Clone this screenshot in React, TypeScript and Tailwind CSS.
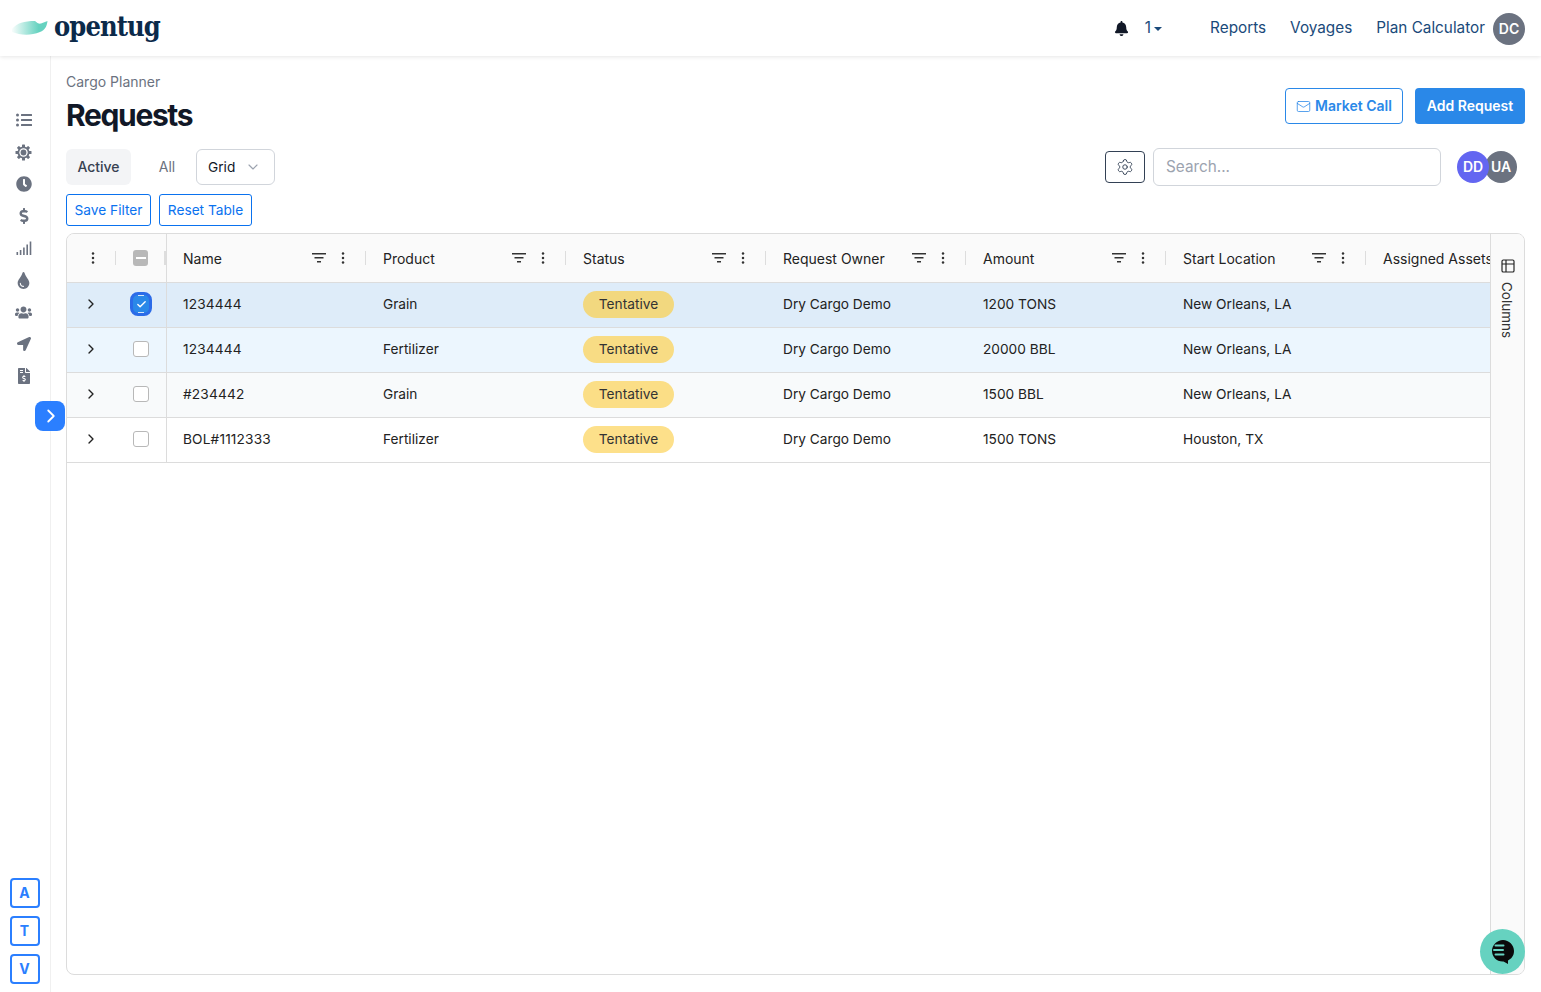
import { Mail, Settings, ChevronDown, ChevronRight, Check, Table2 } from 'lucide-react'
import {
  FaBell,
  FaClock,
  FaDollarSign,
  FaFileInvoiceDollar,
  FaListUl,
  FaLocationArrow,
  FaTint,
  FaUsers,
} from 'react-icons/fa'

const COLUMNS = ['Name', 'Product', 'Status', 'Request Owner', 'Amount', 'Start Location']

const ROWS = [
  { name: '1234444', product: 'Grain', amount: '1200 TONS', location: 'New Orleans, LA', bg: 'bg-[#deecf9]', pill: 'bg-[#f2d87f]', checked: true },
  { name: '1234444', product: 'Fertilizer', amount: '20000 BBL', location: 'New Orleans, LA', bg: 'bg-[#ecf6fe]', pill: 'bg-[#f8dc84]', checked: false },
  { name: '#234442', product: 'Grain', amount: '1500 BBL', location: 'New Orleans, LA', bg: 'bg-[#f8fafb]', pill: 'bg-[#fbde86]', checked: false },
  { name: 'BOL#1112333', product: 'Fertilizer', amount: '1500 TONS', location: 'Houston, TX', bg: 'bg-white', pill: 'bg-[#fde08a]', checked: false },
]

const CELL = 'w-[200px] shrink-0 pl-4 pb-0.5 flex items-center'

function Dots() {
  return (
    <svg width="16" height="16" viewBox="0 0 16 16" className="text-[#333] shrink-0">
      <circle cx="8" cy="3.5" r="1.25" fill="currentColor" />
      <circle cx="8" cy="8" r="1.25" fill="currentColor" />
      <circle cx="8" cy="12.5" r="1.25" fill="currentColor" />
    </svg>
  )
}

function FilterIcon() {
  return (
    <svg width="16" height="12" viewBox="0 0 16 12" className="text-[#333] shrink-0">
      <rect x="1" y="1" width="14" height="1.5" fill="currentColor" />
      <rect x="3.5" y="5" width="9" height="1.5" fill="currentColor" />
      <rect x="6" y="9" width="4" height="1.5" fill="currentColor" />
    </svg>
  )
}

function SignalIcon() {
  return (
    <svg width="16" height="14" viewBox="0 0 16 14" className="text-[#6b7280]">
      <rect x="0.5" y="11" width="1.6" height="3" fill="currentColor" />
      <rect x="3.8" y="9" width="1.6" height="5" fill="currentColor" />
      <rect x="7.1" y="6.5" width="1.6" height="7.5" fill="currentColor" />
      <rect x="10.4" y="3.5" width="1.6" height="10.5" fill="currentColor" />
      <rect x="13.7" y="0.5" width="1.6" height="13.5" fill="currentColor" />
    </svg>
  )
}

function GearIcon() {
  return (
    <svg width="17" height="17" viewBox="0 0 17 17" className="text-[#6b7280]">
      {[0, 45, 90, 135].map(a => (
        <rect key={a} x="7" y="0.5" width="3" height="16" rx="0.6" fill="currentColor" transform={`rotate(${a} 8.5 8.5)`} />
      ))}
      <circle cx="8.5" cy="8.5" r="6" fill="currentColor" />
      <circle cx="8.5" cy="8.5" r="4.2" fill="#fff" />
      <circle cx="8.5" cy="8.5" r="2.9" fill="currentColor" />
    </svg>
  )
}

function Logo() {
  return (
    <svg width="36" height="16" viewBox="0 0 36 16">
      <defs>
        <linearGradient id="swoosh" x1="0" y1="0" x2="1" y2="0">
          <stop offset="0" stopColor="#66d2c0" stopOpacity="0.05" />
          <stop offset="0.75" stopColor="#66d2c0" />
        </linearGradient>
      </defs>
      <path d="M0 9 C5 3 12 1 23 1 C25 3 27 4 29 3.5 L35.5 1 C35 6 33 10 28 12 C18 16 8 15 0 12 Z" fill="url(#swoosh)" />
    </svg>
  )
}

function Header() {
  return (
    <header className="h-14 shrink-0 bg-white flex items-center justify-between pl-3 pr-4 shadow-[0_1px_4px_rgba(0,0,0,0.1)] relative z-10">
      <div className="flex items-center gap-[6px]">
        <Logo />
        <span className="font-['DejaVu_Serif',serif] [font-stretch:condensed] font-bold text-[27px] leading-none tracking-[-0.9px] text-[#0b2a4a] -mt-[3px]">
          opentug
        </span>
      </div>
      <div className="flex items-center text-[#1a4a7a] text-[15.3px] pt-px">
        <FaBell className="text-[#111827] text-[15px] mr-4" />
        <span>1</span>
        <span className="ml-[3px] mr-[48px] border-x-[4px] border-t-[4px] border-x-transparent border-t-[#1a4a7a]" />
        <span className="mr-6">Reports</span>
        <span className="mr-6">Voyages</span>
        <span className="mr-2">Plan Calculator</span>
        <span className="w-8 h-8 rounded-full bg-[#6b7280] text-white text-sm font-semibold flex items-center justify-center">DC</span>
      </div>
    </header>
  )
}

function Sidebar() {
  const icons = [
    <FaListUl key="list" className="text-base" />,
    <GearIcon key="gear" />,
    <FaClock key="clock" className="text-base" />,
    <FaDollarSign key="dollar" className="text-base" />,
    <SignalIcon key="signal" />,
    <FaTint key="tint" className="text-[17px]" />,
    <FaUsers key="users" className="text-[17px]" />,
    <FaLocationArrow key="arrow" className="text-sm" />,
    <FaFileInvoiceDollar key="invoice" className="text-base" />,
  ]
  return (
    <aside className="w-[51px] shrink-0 border-r border-[#f0f0f0] flex flex-col items-center relative pt-12 pb-[8px] pr-[3px]">
      {icons.map((icon, i) => (
        <div key={i} className="h-8 w-8 flex items-center justify-center text-[#6b7280]">
          {icon}
        </div>
      ))}
      <button className="absolute left-[35px] top-[345px] w-[30px] h-[30px] rounded-lg bg-[#2b7fff] text-white flex items-center justify-center z-10">
        <ChevronRight size={22} strokeWidth={2} className="ml-px" />
      </button>
      <div className="mt-auto ml-[2px] flex flex-col gap-2">
        {['A', 'T', 'V'].map(l => (
          <div key={l} className="w-[30px] h-[30px] rounded-[4px] border-2 border-[#2b7fff] text-[#2b7fff] text-sm font-bold flex items-center justify-center">
            {l}
          </div>
        ))}
      </div>
    </aside>
  )
}

function Toolbar() {
  return (
    <>
      <div className="flex items-start justify-between">
        <div>
          <div className="text-sm leading-5 text-[#6b7280] pt-4">Cargo Planner</div>
          <h1 className="text-[30px] leading-9 font-bold tracking-[-1.35px] text-[#111827] mt-[5px]">Requests</h1>
        </div>
        <div className="flex gap-3 mt-8">
          <button className="h-9 w-[118px] rounded border border-[#2a88e8] text-[#2a88e8] text-sm font-semibold flex items-center justify-center gap-[4px]">
            <Mail size={15} strokeWidth={1.25} />
            Market Call
          </button>
          <button className="h-9 w-[110px] rounded bg-[#2a88e8] text-white text-sm font-semibold">Add Request</button>
        </div>
      </div>
      <div className="flex items-center justify-between mt-[15px]">
        <div className="flex items-center">
          <div className="h-9 w-[65px] rounded-md bg-[#f3f4f6] text-sm font-medium text-[#374151] flex items-center justify-center">Active</div>
          <div className="w-[65px] pl-[7px] text-sm text-[#6b7280] text-center">All</div>
          <div className="h-9 w-[79px] rounded-md border border-[#d1d5db] text-[13.7px] text-[#111827] flex items-center justify-between pl-[11px] pr-[13px]">
            Grid
            <ChevronDown size={16} strokeWidth={1.75} className="text-[#9ca3af]" />
          </div>
        </div>
        <div className="flex items-center">
          <button className="w-10 h-8 rounded border border-[#334155] flex items-center justify-center mr-2">
            <Settings size={18} strokeWidth={1.25} className="text-[#334155]" />
          </button>
          <div className="w-[288px] h-[38px] rounded-md border border-[#d1d5db] pl-3 flex items-center text-[15.3px] text-[#9ca3af]">Search...</div>
          <div className="flex ml-4 mr-2">
            <span className="w-8 h-8 rounded-full bg-[#6366f1] text-white text-sm font-semibold flex items-center justify-center relative z-10">DD</span>
            <span className="w-8 h-8 rounded-full bg-[#6b7280] text-white text-sm font-semibold flex items-center justify-center -ml-[4px]">UA</span>
          </div>
        </div>
      </div>
      <div className="flex gap-2 mt-[8px]">
        <button className="h-8 w-[85px] rounded-[3px] border border-[#0a72ef] text-[#0a72ef] text-[13.7px]">Save Filter</button>
        <button className="h-8 w-[93px] rounded-[3px] border border-[#0a72ef] text-[#0a72ef] text-[13.7px]">Reset Table</button>
      </div>
    </>
  )
}

function Checkbox({ checked }: { checked: boolean }) {
  if (checked) {
    return (
      <span className="relative w-[22px] h-6 rounded-lg bg-[#2a88e8] border-[3px] border-[#2b6be8] flex items-center justify-center">
        <Check size={11} strokeWidth={3} className="text-white" />
        <span className="absolute left-[5px] top-0 w-[6px] h-px bg-white/80" />
        <span className="absolute left-[5px] bottom-0 w-[6px] h-px bg-white/80" />
      </span>
    )
  }
  return <span className="w-4 h-4 rounded-[3px] border border-[#b8b8b8] bg-white" />
}

function Grid() {
  return (
    <div className="mt-[7px] flex-1 min-h-0 mb-[17px] rounded-lg border border-[#dcdcdc] flex overflow-hidden text-[13.7px] text-[#222]">
      <div className="flex-1 min-w-0 overflow-hidden">
        <div className="flex h-[49px] bg-[#fafafa] border-b border-[#dcdcdc]">
          <div className="w-[100px] shrink-0 border-r border-[#dcdcdc] flex items-center">
            <div className="ml-[18px]"><Dots /></div>
            <span className="ml-[14px] w-px h-[14px] bg-[#ddd]" />
            <span className="ml-[17px] w-4 h-4 rounded-[3px] bg-[#b8b8b8] flex items-center justify-center">
              <span className="w-[10px] h-[2px] bg-white" />
            </span>
            <span className="ml-4 w-0.5 h-[14px] bg-[#ddd]" />
          </div>
          {COLUMNS.map(c => (
            <div key={c} className="w-[200px] shrink-0 flex items-center pl-4">
              <span className="flex-1 text-[14px]">{c}</span>
              <FilterIcon />
              <div className="ml-2"><Dots /></div>
              <span className="ml-[14px] mr-px w-px h-[14px] bg-[#ddd]" />
            </div>
          ))}
          <div className="w-[200px] shrink-0 flex items-center pl-4 text-[14px] whitespace-nowrap">Assigned Assets</div>
        </div>
        {ROWS.map((r, i) => (
          <div key={i} className={`flex h-[45px] border-b border-[#dcdcdc] ${r.bg}`}>
            <div className="w-[100px] shrink-0 pb-0.5 border-r border-[#dcdcdc] flex items-center relative">
              <ChevronRight size={16} strokeWidth={2} className="ml-4 text-[#222]" />
              <div className="w-6 flex items-center justify-center ml-[30px]">
                <Checkbox checked={r.checked} />
              </div>
            </div>
            <div className={`${CELL} tracking-[0.15px]`}>{r.name}</div>
            <div className={CELL}>{r.product}</div>
            <div className={CELL}>
              <span className={`h-[27px] w-[91px] rounded-full ${r.pill} text-[#333] flex items-center justify-center`}>Tentative</span>
            </div>
            <div className={CELL}>Dry Cargo Demo</div>
            <div className={CELL}>{r.amount}</div>
            <div className={CELL}>{r.location}</div>
          </div>
        ))}
      </div>
      <div className="w-[34px] shrink-0 bg-[#fafafa] border-l border-[#dcdcdc] flex flex-col items-center pt-6">
        <Table2 size={16} strokeWidth={1.75} className="text-[#222]" />
        <span className="mt-2 -ml-[2px] [writing-mode:vertical-rl] text-[13.5px] leading-none text-[#333]">Columns</span>
      </div>
    </div>
  )
}

function ChatBubble() {
  return (
    <div className="absolute right-4 bottom-[18px] w-[45px] h-[45px] rounded-full bg-[#66d2c0] flex items-center justify-center z-20">
      <svg width="24" height="26" viewBox="0 0 24 26">
        <path d="M12 1 C18 1 23 6 23 12 C23 17 20 20 17 21.5 L17 25 L12.5 22.5 C6 23 1 18 1 12 C1 6 6 1 12 1 Z" fill="#0a0a0a" />
        <rect x="3.5" y="5.5" width="10" height="2" rx="1" fill="#66d2c0" />
        <rect x="2" y="10" width="11" height="2" rx="1" fill="#66d2c0" />
        <rect x="3.5" y="14.5" width="10" height="2" rx="1" fill="#66d2c0" />
      </svg>
    </div>
  )
}

export default function App() {
  return (
    <div className="h-[992px] w-full flex flex-col bg-white font-['Inter',sans-serif] overflow-hidden relative">
      <Header />
      <div className="flex flex-1 min-h-0">
        <Sidebar />
        <main className="flex-1 min-w-0 flex flex-col pl-[15px] pr-4">
          <Toolbar />
          <Grid />
        </main>
      </div>
      <ChatBubble />
    </div>
  )
}
